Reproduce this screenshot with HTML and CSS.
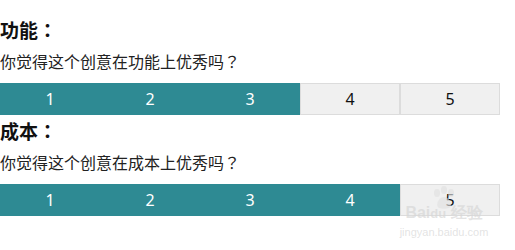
FILE: index.html
```html
<!DOCTYPE html>
<html>
<head>
  <meta charset="UTF-8" />
  <title>创意评分</title>
  <link rel="stylesheet" href="styles.css">
</head>
<body>

<div class="survey">
  <!-- 功能 -->
  <div class="item">
    <div class="item-title">功能<span class="punct">：</span></div>
    <div class="item-question">你觉得这个创意在功能上优秀吗<span class="punct">？</span></div>
    <div class="scale">
      <div class="cell on">1</div>
      <div class="cell on">2</div>
      <div class="cell on">3</div>
      <div class="cell">4</div>
      <div class="cell">5</div>
    </div>
  </div>

  <!-- 成本 -->
  <div class="item">
    <div class="item-title">成本<span class="punct">：</span></div>
    <div class="item-question">你觉得这个创意在成本上优秀吗<span class="punct">？</span></div>
    <div class="scale">
      <div class="cell on">1</div>
      <div class="cell on">2</div>
      <div class="cell on">3</div>
      <div class="cell on">4</div>
      <div class="cell">5</div>
    </div>
  </div>

  <!-- watermark -->
  <div class="watermark">
    <svg class="paw" width="30" height="24" viewBox="0 0 30 24">
      <ellipse cx="8" cy="7" rx="3" ry="4" />
      <ellipse cx="15" cy="4" rx="3" ry="4" />
      <ellipse cx="22" cy="7" rx="3" ry="4" />
      <path d="M15 11 C9 11 6 20 10 22 C13 23 17 23 20 22 C24 20 21 11 15 11 Z" />
    </svg>
    <div class="wm-brand">Bai<span class="wm-du">du</span> 经验</div>
    <div class="wm-url">jingyan.baidu.com</div>
  </div>
</div>

</body>
</html>
```

FILE: styles.css
```css
body {
  margin: 0;
  background: #fff;
  font-family: "Noto Sans CJK SC", "Noto Sans", sans-serif;
  color: #111;
}

.survey {
  position: relative;
  width: 515px;
  height: 250px;
  padding-top: 18px;
  box-sizing: border-box;
}

.item {
  margin-bottom: 4px;
}

.item-title {
  font-size: 19px;
  font-weight: bold;
  line-height: 24px;
  height: 24px;
}

/* full-width marks sit centred in their box */
.punct {
  font-family: "Noto Sans CJK TC", sans-serif;
}

.item-question {
  font-size: 16px;
  line-height: 22px;
  margin-top: 8px;
  color: #222;
}

/* rating bar */
.scale {
  display: flex;
  width: 500px;
  height: 32px;
  margin-top: 11px;
}

.cell {
  flex: 1;
  display: flex;
  align-items: center;
  justify-content: center;
  box-sizing: border-box;
  background: #f0f0f0;
  border: 1px solid #dcdcdc;
  font-family: "Noto Sans", sans-serif;
  font-size: 16px;
  color: #111;
}

.cell.on {
  background: #2e8a93;
  border-color: #2e8a93;
  color: #fff;
}

/* faint site mark over the bottom right */
.watermark {
  position: absolute;
  left: 394px;
  top: 186px;
  width: 100px;
  text-align: center;
  color: rgba(215, 215, 215, 0.7);
  font-family: "Liberation Sans", sans-serif;
  pointer-events: none;
}

.paw {
  display: block;
  margin: 0 auto;
  fill: rgba(225, 225, 225, 0.65);
}

.wm-brand {
  font-size: 16px;
  font-weight: bold;
  line-height: 14px;
  margin-top: -4px;
}

.wm-du {
  font-size: 13px;
}

.wm-url {
  font-size: 11px;
  line-height: 14px;
  margin-top: 4px;
}
```
